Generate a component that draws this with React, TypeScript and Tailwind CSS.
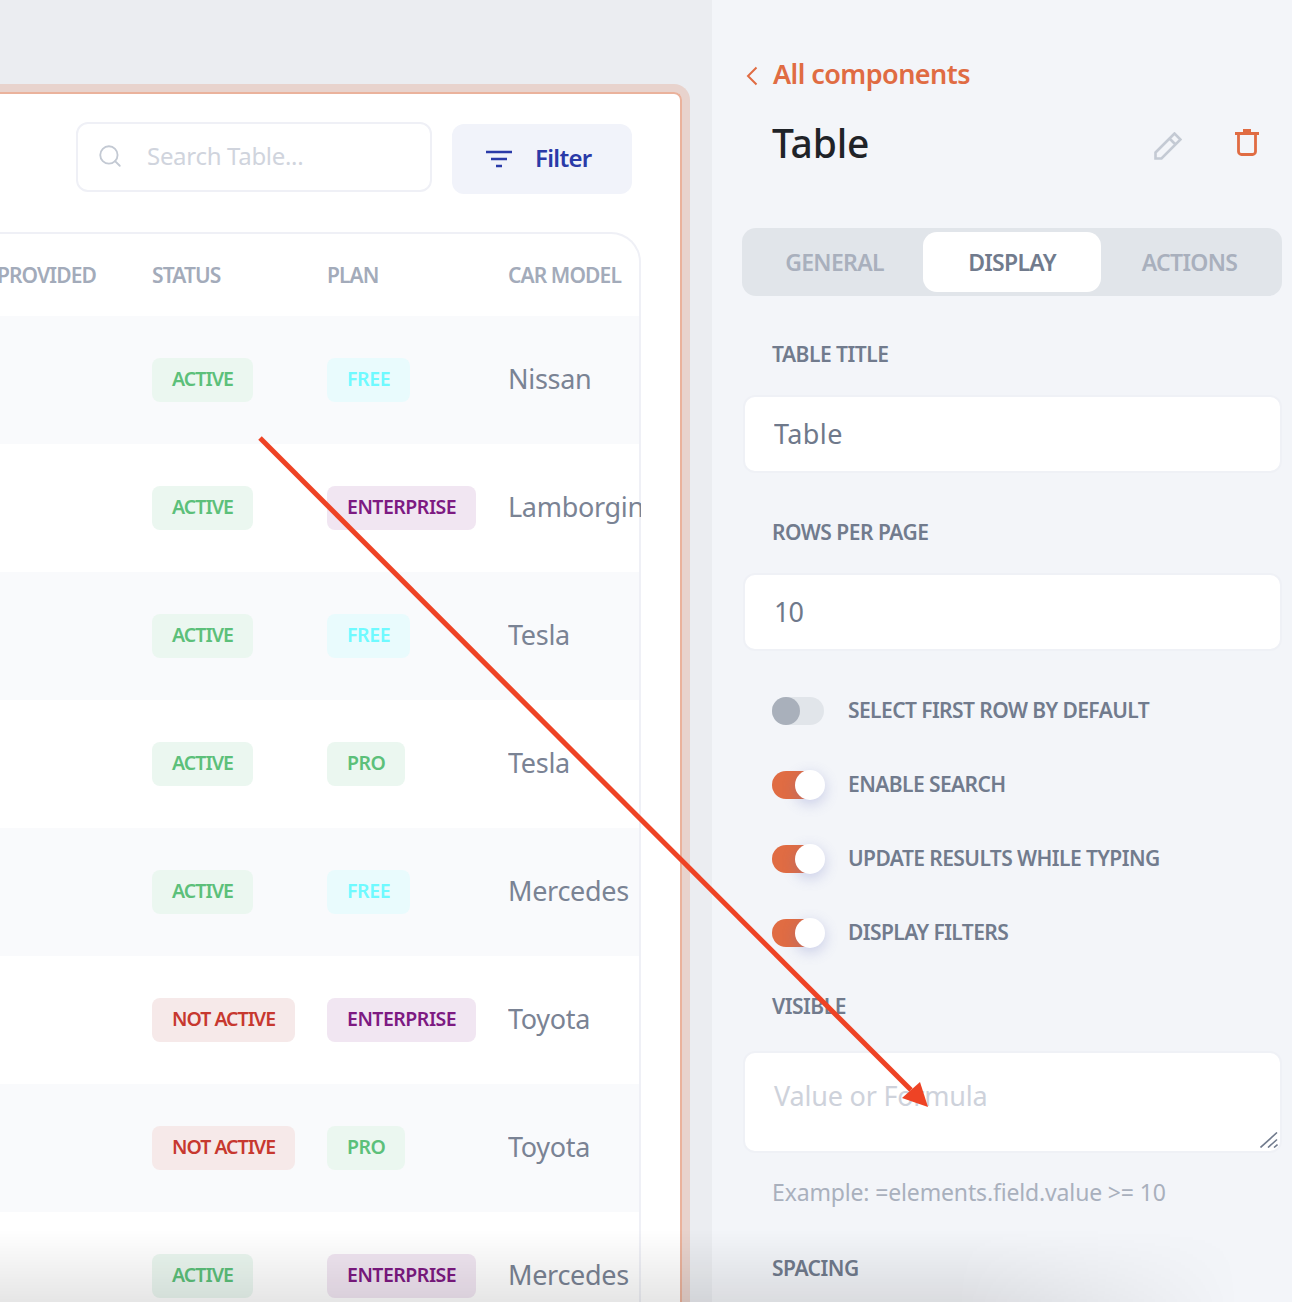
import React from "react";
import { Search } from "lucide-react";

type Row = { status: "ACTIVE" | "NOT ACTIVE"; plan: "FREE" | "ENTERPRISE" | "PRO"; car: string };

const rows: Row[] = [
  { status: "ACTIVE", plan: "FREE", car: "Nissan" },
  { status: "ACTIVE", plan: "ENTERPRISE", car: "Lamborgini" },
  { status: "ACTIVE", plan: "FREE", car: "Tesla" },
  { status: "ACTIVE", plan: "PRO", car: "Tesla" },
  { status: "ACTIVE", plan: "FREE", car: "Mercedes" },
  { status: "NOT ACTIVE", plan: "ENTERPRISE", car: "Toyota" },
  { status: "NOT ACTIVE", plan: "PRO", car: "Toyota" },
  { status: "ACTIVE", plan: "ENTERPRISE", car: "Mercedes" },
];

const badgeStyles: Record<string, string> = {
  ACTIVE: "bg-[#ebf7f0] text-[#5cc07a] tracking-[-0.95px]",
  "NOT ACTIVE": "bg-[#f6e9e9] text-[#c7382f] tracking-[-1px]",
  FREE: "bg-[#e9fbfd] text-[#6ffaff] tracking-[-0.4px]",
  ENTERPRISE: "bg-[#f1e6f2] text-[#7d1a82] tracking-[-0.5px]",
  PRO: "bg-[#ebf7f0] text-[#5cc07a] tracking-[-0.5px]",
};

const Badge = ({ label }: { label: string }) => (
  <span
    className={`inline-flex h-[44px] items-center rounded-lg px-5 pb-[2px] text-[19.5px] font-semibold ${badgeStyles[label]}`}
  >
    {label}
  </span>
);

const Toggle = ({ on, label }: { on: boolean; label: string }) => (
  <div className="flex h-[74px] items-center pl-[30px]">
    {on ? (
      <div className="flex h-[28px] w-[52px] items-center justify-end rounded-full bg-[#e06c43]">
        <div className="-mr-px size-[30px] shrink-0 rounded-full bg-white shadow-[0_4px_14px_rgba(100,110,190,0.3)]" />
      </div>
    ) : (
      <div className="flex h-[28px] w-[52px] items-center rounded-full bg-[#e1e5ea]">
        <div className="size-[28px] rounded-full bg-[#a9b0bb]" />
      </div>
    )}
    <span className="ml-6 text-[21px] font-semibold tracking-[-0.58px] text-[#717b8d]">{label}</span>
  </div>
);

const FieldLabel = ({ children }: { children: React.ReactNode }) => (
  <div className="pl-[30px] text-[21px] leading-[28px] font-semibold tracking-[-0.5px] text-[#717b8d]">
    {children}
  </div>
);

const inputClass =
  "block h-[78px] w-full rounded-xl border-2 border-[#eff1f6] bg-white pr-[30px] pb-[2px] pl-[29px] text-[27px] text-[#6f798b] outline-none";

export default function App() {
  return (
    <div className="relative flex h-[1302px] w-[1292px] overflow-hidden bg-[#ebedf1] font-['Noto_Sans',sans-serif]">
      {/* canvas with the selected table */}
      <div className="w-[712px] shrink-0 pt-[84px] pr-[22px]">
        <div className="h-[1300px] rounded-tr-[16px] border-t-8 border-r-8 border-[#e8d3cd]">
          <div className="h-full rounded-tr-[8px] border-t-2 border-r-2 border-[#eab29c] bg-white pt-[28px]">
            <div className="flex items-start pl-[76px]">
              <div className="flex h-[70px] w-[356px] items-center rounded-xl border-2 border-[#eff0f6] pb-[3px] pl-[19px]">
                <Search size={26} strokeWidth={1.7} className="text-[#c3c9d3]" />
                <span className="ml-[24px] text-[24px] tracking-[-0.3px] text-[#d0d4dd]">Search Table...</span>
              </div>
              <div className="mt-[2px] ml-5 flex h-[70px] w-[180px] items-center rounded-xl bg-[#f1f3fa] pl-[33px]">
                <svg width="28" height="18" viewBox="0 0 28 18" fill="none" stroke="#2a3aa8" strokeWidth="2.4">
                  <path d="M1 2h26M6 9h16M11 16h6" />
                </svg>
                <span className="mb-[2px] ml-[22px] text-[24px] font-semibold tracking-[-0.7px] text-[#2a3aa8]">Filter</span>
              </div>
            </div>

            <div className="mt-[38px] w-[641px] rounded-tr-[30px] border-t-2 border-r-2 border-[#eff0f6]">
              <div className="flex h-[82px] items-center pt-[2px] text-[21px] font-semibold tracking-[-0.9px] text-[#a3abba]">
                <div className="flex w-[152px] shrink-0 justify-end overflow-hidden pr-[56px] whitespace-nowrap">
                  PROVIDED
                </div>
                <div className="w-[175px] shrink-0">STATUS</div>
                <div className="w-[181px] shrink-0">PLAN</div>
                <div className="whitespace-nowrap">CAR MODEL</div>
              </div>
              {rows.map((r, i) => (
                <div key={i} className={`flex h-[128px] items-center ${i % 2 === 0 ? "bg-[#f9fafc]" : "bg-white"}`}>
                  <div className="w-[152px] shrink-0" />
                  <div className="w-[175px] shrink-0">
                    <Badge label={r.status} />
                  </div>
                  <div className="w-[181px] shrink-0">
                    <Badge label={r.plan} />
                  </div>
                  <div className="w-[133px] shrink-0 overflow-hidden pb-[2px] text-[27px] tracking-[-0.3px] whitespace-nowrap text-[#7a8394]">
                    {r.car}
                  </div>
                </div>
              ))}
            </div>
          </div>
        </div>
      </div>

      {/* settings panel */}
      <div className="w-[580px] shrink-0 bg-[#f3f5f9] pt-[54px] pr-[10px] pl-[30px]">
        <div className="flex h-[40px] items-center text-[#e06c43]">
          <svg width="12" height="20" viewBox="0 0 12 20" fill="none" stroke="#e06c43" strokeWidth="2" className="mt-[3px] ml-[4px]">
            <path d="M10.5 1.5L2 10l8.5 8.5" />
          </svg>
          <span className="ml-[15px] text-[27px] font-semibold tracking-[-0.55px]">All components</span>
        </div>
        <div className="mt-[20px] flex h-[58px] items-center pl-[30px]">
          <span className="flex-1 text-[39px] font-medium tracking-[-0.2px] text-[#1f2328]">Table</span>
          <svg width="28" height="28" viewBox="0 0 28 28" fill="none" stroke="#c4cad4" strokeWidth="2.6" className="mt-[6px]">
            <path d="M1.5 20.5L20.5 1.5L26.5 7.5L7.5 26.5H1.5ZM15.5 6.5L21.5 12.5" />
          </svg>
          <svg width="26" height="28" viewBox="0 0 26 28" fill="none" stroke="#e06c43" strokeWidth="2.8" className="mr-[22px] ml-[52px]">
            <path d="M1 4.5h24M4.5 4.5v18a3 3 0 0 0 3 3h11a3 3 0 0 0 3-3v-18" />
            <path d="M9 1.5h8" strokeWidth="3" />
          </svg>
        </div>

        <div className="mt-[56px] flex h-[68px] items-center rounded-[14px] bg-[#e1e5ea] px-1 text-[23px] font-semibold tracking-[-0.7px]">
          <div className="flex h-[60px] w-[177px] items-center justify-center text-[#a9b0bd]">GENERAL</div>
          <div className="flex h-[60px] w-[178px] items-center justify-center rounded-[14px] bg-white text-[#717b8d]">
            DISPLAY
          </div>
          <div className="flex h-[60px] w-[177px] items-center justify-center text-[#a9b0bd]">ACTIONS</div>
        </div>

        <div className="mt-[44px]">
          <FieldLabel>TABLE TITLE</FieldLabel>
        </div>
        <div className="mt-[27px] ml-px">
          <input readOnly value="Table" className={`${inputClass} tracking-[0.4px]`} />
        </div>
        <div className="mt-[45px]">
          <FieldLabel>ROWS PER PAGE</FieldLabel>
        </div>
        <div className="mt-[27px] ml-px">
          <input readOnly value="10" className={`${inputClass} tracking-[-1px]`} />
        </div>

        <div className="mt-[23px]">
          <Toggle on={false} label="SELECT FIRST ROW BY DEFAULT" />
          <Toggle on label="ENABLE SEARCH" />
          <Toggle on label="UPDATE RESULTS WHILE TYPING" />
          <Toggle on label="DISPLAY FILTERS" />
        </div>

        <div className="mt-[22px]">
          <FieldLabel>VISIBLE</FieldLabel>
        </div>
        <div className="relative mt-[31px] ml-px">
          <textarea
            readOnly
            placeholder="Value or Formula"
            className="block h-[102px] w-full resize-none rounded-xl border-2 border-[#eff1f6] bg-white py-[25px] pr-[30px] pl-[29px] text-[27px] leading-[36px] tracking-[-0.2px] outline-none placeholder:text-[#ced2db]"
          />
          <svg width="18" height="16" viewBox="0 0 18 16" fill="none" stroke="#717b8d" strokeWidth="1.6" className="absolute right-[4px] bottom-[5px]">
            <path d="M0.5 15.5L17 0.5M8 15.5L17 7.5M14 15.5L17.5 12.5" />
          </svg>
        </div>
        <div className="mt-[23px] pl-[30px] text-[23px] leading-[32px] tracking-[-0.15px] text-[#a9b0bd]">
          Example: =elements.field.value &gt;= 10
        </div>
        <div className="mt-[46px]">
          <FieldLabel>SPACING</FieldLabel>
        </div>
      </div>

      {/* fade at the bottom of the screenshot */}
      <div className="pointer-events-none absolute inset-x-0 bottom-0 h-[72px] bg-gradient-to-t from-black/10 to-transparent [mask-image:linear-gradient(to_right,black_74%,transparent_96%)]" />

      {/* annotation arrow */}
      <svg className="pointer-events-none absolute top-0 left-0" width="1292" height="1302" fill="none">
        <path d="M260 438L911 1090" stroke="#ee4325" strokeWidth="5" />
        <path d="M928 1107L902 1098L920 1082Z" fill="#ee4325" />
      </svg>
    </div>
  );
}
